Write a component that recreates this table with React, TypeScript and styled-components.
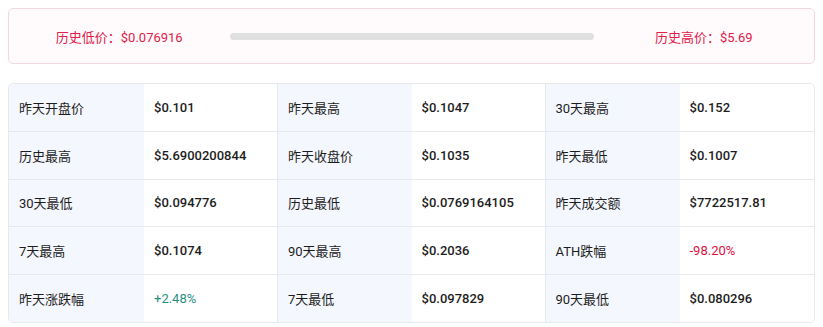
import * as React from "react";
import styled, { createGlobalStyle } from "styled-components";

const GlobalStyle = createGlobalStyle`
    body {
        margin: 8px;
        background: #ffffff;
        font-family: Roboto, "Noto Sans CJK SC", sans-serif;
        color: #222222;
    }
`;

const RangeBox = styled.div`
    display: grid;
    grid-template-columns: 1fr 364px 1fr;
    align-items: center;
    height: 54px;
    background: #fffafb;
    border: 1px solid #f0d9df;
    border-radius: 5px;
    margin-bottom: 19px;
`;

const RangeText = styled.span`
    text-align: center;
    font-size: 13px;
    color: #e0204a;
`;

const Track = styled.div`
    height: 7px;
    border-radius: 4px;
    background: #e0e0e0;
`;

const Table = styled.div`
    display: grid;
    grid-template-columns: 135px 133px 1fr 133px 135px 1fr;
    border: 1px solid #e6e8ec;
    border-radius: 5px;
    overflow: hidden;
`;

const Cell = styled.div<{ $label?: boolean; $divider?: boolean; $last?: boolean; $tone?: "up" | "down" }>`
    display: flex;
    align-items: center;
    height: 46.8px;
    padding-left: 10px;
    font-size: 13px;
    background: ${({ $label }) => ($label ? "#f4f7fd" : "#ffffff")};
    border-bottom: ${({ $last }) => ($last ? "none" : "1px solid #e6e8ec")};
    border-left: ${({ $divider }) => ($divider ? "1px solid #e6e8ec" : "none")};
    font-weight: ${({ $label, $tone }) => ($label || $tone ? 400 : 500)};
    color: ${({ $tone }) => ($tone === "up" ? "#2a8f80" : $tone === "down" ? "#e0103f" : "#1d1d1d")};
`;

type Stat = { label: string; value: string; tone?: "up" | "down" };

const rows: Stat[][] = [
    [
        { label: "昨天开盘价", value: "$0.101" },
        { label: "昨天最高", value: "$0.1047" },
        { label: "30天最高", value: "$0.152" },
    ],
    [
        { label: "历史最高", value: "$5.6900200844" },
        { label: "昨天收盘价", value: "$0.1035" },
        { label: "昨天最低", value: "$0.1007" },
    ],
    [
        { label: "30天最低", value: "$0.094776" },
        { label: "历史最低", value: "$0.0769164105" },
        { label: "昨天成交额", value: "$7722517.81" },
    ],
    [
        { label: "7天最高", value: "$0.1074" },
        { label: "90天最高", value: "$0.2036" },
        { label: "ATH跌幅", value: "-98.20%", tone: "down" },
    ],
    [
        { label: "昨天涨跌幅", value: "+2.48%", tone: "up" },
        { label: "7天最低", value: "$0.097829" },
        { label: "90天最低", value: "$0.080296" },
    ],
];

export default function App() {
    return (
        <>
            <GlobalStyle />
            <RangeBox>
                <RangeText>历史低价：$0.076916</RangeText>
                <Track />
                <RangeText>历史高价：$5.69</RangeText>
            </RangeBox>
            <Table>
                {rows.map((row, r) =>
                    row.map((s, i) => (
                        <React.Fragment key={`${r}-${i}`}>
                            <Cell $label $divider={i > 0} $last={r === rows.length - 1}>
                                {s.label}
                            </Cell>
                            <Cell $tone={s.tone} $last={r === rows.length - 1}>
                                {s.value}
                            </Cell>
                        </React.Fragment>
                    ))
                )}
            </Table>
        </>
    );
}
